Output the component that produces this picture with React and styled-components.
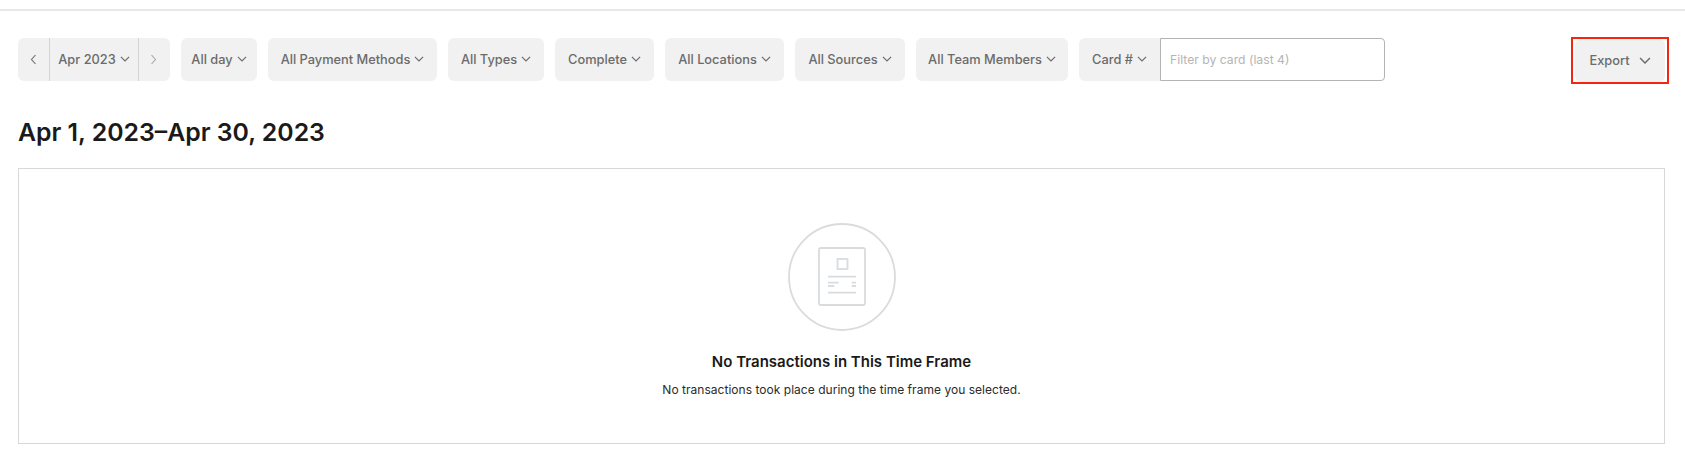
import styled, { createGlobalStyle } from "styled-components";

const Global = createGlobalStyle`
  html, body { margin: 0; background: #fff; }
  body { font-family: Inter, "Liberation Sans", sans-serif; color: #1a1a1a; }
`;

const Page = styled.div`
  width: 1685px;
  height: 465px;
  overflow: hidden;
  display: flex;
  flex-direction: column;
`;

const TopRule = styled.div`
  height: 2px;
  margin-top: 9px;
  background: #e8e8e8;
`;

const Content = styled.main`
  display: flex;
  flex-direction: column;
  padding: 26px 20px 0 18px;
`;

const Toolbar = styled.div`
  display: flex;
  justify-content: space-between;
  align-items: flex-start;
  height: 47px;
  margin-right: -4px;
`;

const Filters = styled.div`
  display: flex;
  gap: 11px;
  margin-top: 1px;
`;

const Group = styled.div`
  display: flex;
`;

const Pill = styled.button`
  box-sizing: border-box;
  display: flex;
  align-items: center;
  justify-content: center;
  gap: ${(p) => p.$gap ?? 4}px;
  width: ${(p) => p.$w}px;
  height: 43px;
  padding: 0;
  border: 0;
  border-radius: ${(p) => p.$radius ?? "6px"};
  background: #f1f1f1;
  color: #6b6b6b;
  font: 500 12.8px Inter, "Liberation Sans", sans-serif;
`;

const Step = styled(Pill)`
  padding-right: ${(p) => (p.$side === "next" ? "2px" : "0")};
  border-left: ${(p) => (p.$side === "next" ? "1px solid #d4d4d4" : "0")};
  border-right: ${(p) => (p.$side === "prev" ? "1px solid #d4d4d4" : "0")};
`;

const CardInput = styled.div`
  box-sizing: border-box;
  display: flex;
  align-items: center;
  width: 225px;
  height: 43px;
  padding-left: 9px;
  border: 1px solid #b4b4b4;
  border-radius: 0 4px 4px 0;
  color: #b5b5b5;
  font: 400 12.2px Inter, "Liberation Sans", sans-serif;
`;

const ExportFrame = styled.div`
  box-sizing: border-box;
  width: 98px;
  height: 47px;
  border: 2px solid #f5260f;
  display: flex;
  justify-content: center;
`;

const Title = styled.h1`
  margin: 33px 0 21px;
  height: 30px;
  font-size: 24.8px;
  line-height: 30px;
  font-weight: 600;
  color: #1a1a1a;
`;

const EmptyPanel = styled.section`
  box-sizing: border-box;
  height: 276px;
  padding-top: 54px;
  border: 1px solid #d8d8d8;
  display: flex;
  flex-direction: column;
  align-items: center;
`;

const EmptyTitle = styled.h2`
  margin: 21px 0 0;
  font-size: 15px;
  line-height: 20px;
  font-weight: 600;
  color: #1a1a1a;
`;

const EmptyText = styled.p`
  margin: 9px 0 0;
  font-size: 12px;
  line-height: 18px;
  font-weight: 400;
  letter-spacing: 0.03px;
  color: #2b2b2b;
`;

const Chevron = ({ size = 10, color = "#6b6b6b" }) => (
  <svg width={size} height={size * 0.64} viewBox="0 0 11 7" fill="none">
    <path d="M1 1l4.5 4.5L10 1" stroke={color} strokeWidth="1.3" />
  </svg>
);

const Side = ({ flip, color }) => (
  <svg width="7" height="11" viewBox="0 0 7 11" fill="none">
    <path d={flip ? "M1.5 1l4 4.5-4 4.5" : "M5.5 1l-4 4.5 4 4.5"} stroke={color} strokeWidth="1.1" />
  </svg>
);

const ReceiptIcon = () => (
  <svg width="108" height="108" viewBox="0 0 108 108" fill="none" stroke="#d9dcde" strokeWidth="1.8">
    <circle cx="54" cy="54" r="53" />
    <rect x="31" y="25" width="46" height="57" rx="2" />
    <rect x="49.5" y="36" width="10" height="10" />
    <path d="M40 53.7h28M40 59.7h10.7M63.7 59.7H68M40 63h6.3M63.7 63H68M40 69.7h28" />
  </svg>
);

const filters = [
  ["All day", 76],
  ["All Payment Methods", 169],
  ["All Types", 96],
  ["Complete", 99],
  ["All Locations", 119],
  ["All Sources", 110],
  ["All Team Members", 152],
];

export default function App() {
  return (
    <Page>
      <Global />
      <TopRule />
      <Content>
        <Toolbar>
          <Filters>
            <Group>
              <Step $w={32} $radius="6px 0 0 6px" $side="prev">
                <Side color="#6b6b6b" />
              </Step>
              <Pill $w={88} $radius="0">
                Apr 2023 <Chevron />
              </Pill>
              <Step $w={32} $radius="0 6px 6px 0" $side="next">
                <Side flip color="#a8a8a8" />
              </Step>
            </Group>
            {filters.map(([label, width]) => (
              <Pill key={label} $w={width}>
                {label} <Chevron />
              </Pill>
            ))}
            <Group>
              <Pill $w={81} $radius="6px 0 0 6px">
                Card # <Chevron />
              </Pill>
              <CardInput>Filter by card (last 4)</CardInput>
            </Group>
          </Filters>
          <ExportFrame>
            <Pill $w={90} $gap={9}>
              Export <Chevron size={12} />
            </Pill>
          </ExportFrame>
        </Toolbar>
        <Title>Apr 1, 2023–Apr 30, 2023</Title>
        <EmptyPanel>
          <ReceiptIcon />
          <EmptyTitle>No Transactions in This Time Frame</EmptyTitle>
          <EmptyText>No transactions took place during the time frame you selected.</EmptyText>
        </EmptyPanel>
      </Content>
    </Page>
  );
}
